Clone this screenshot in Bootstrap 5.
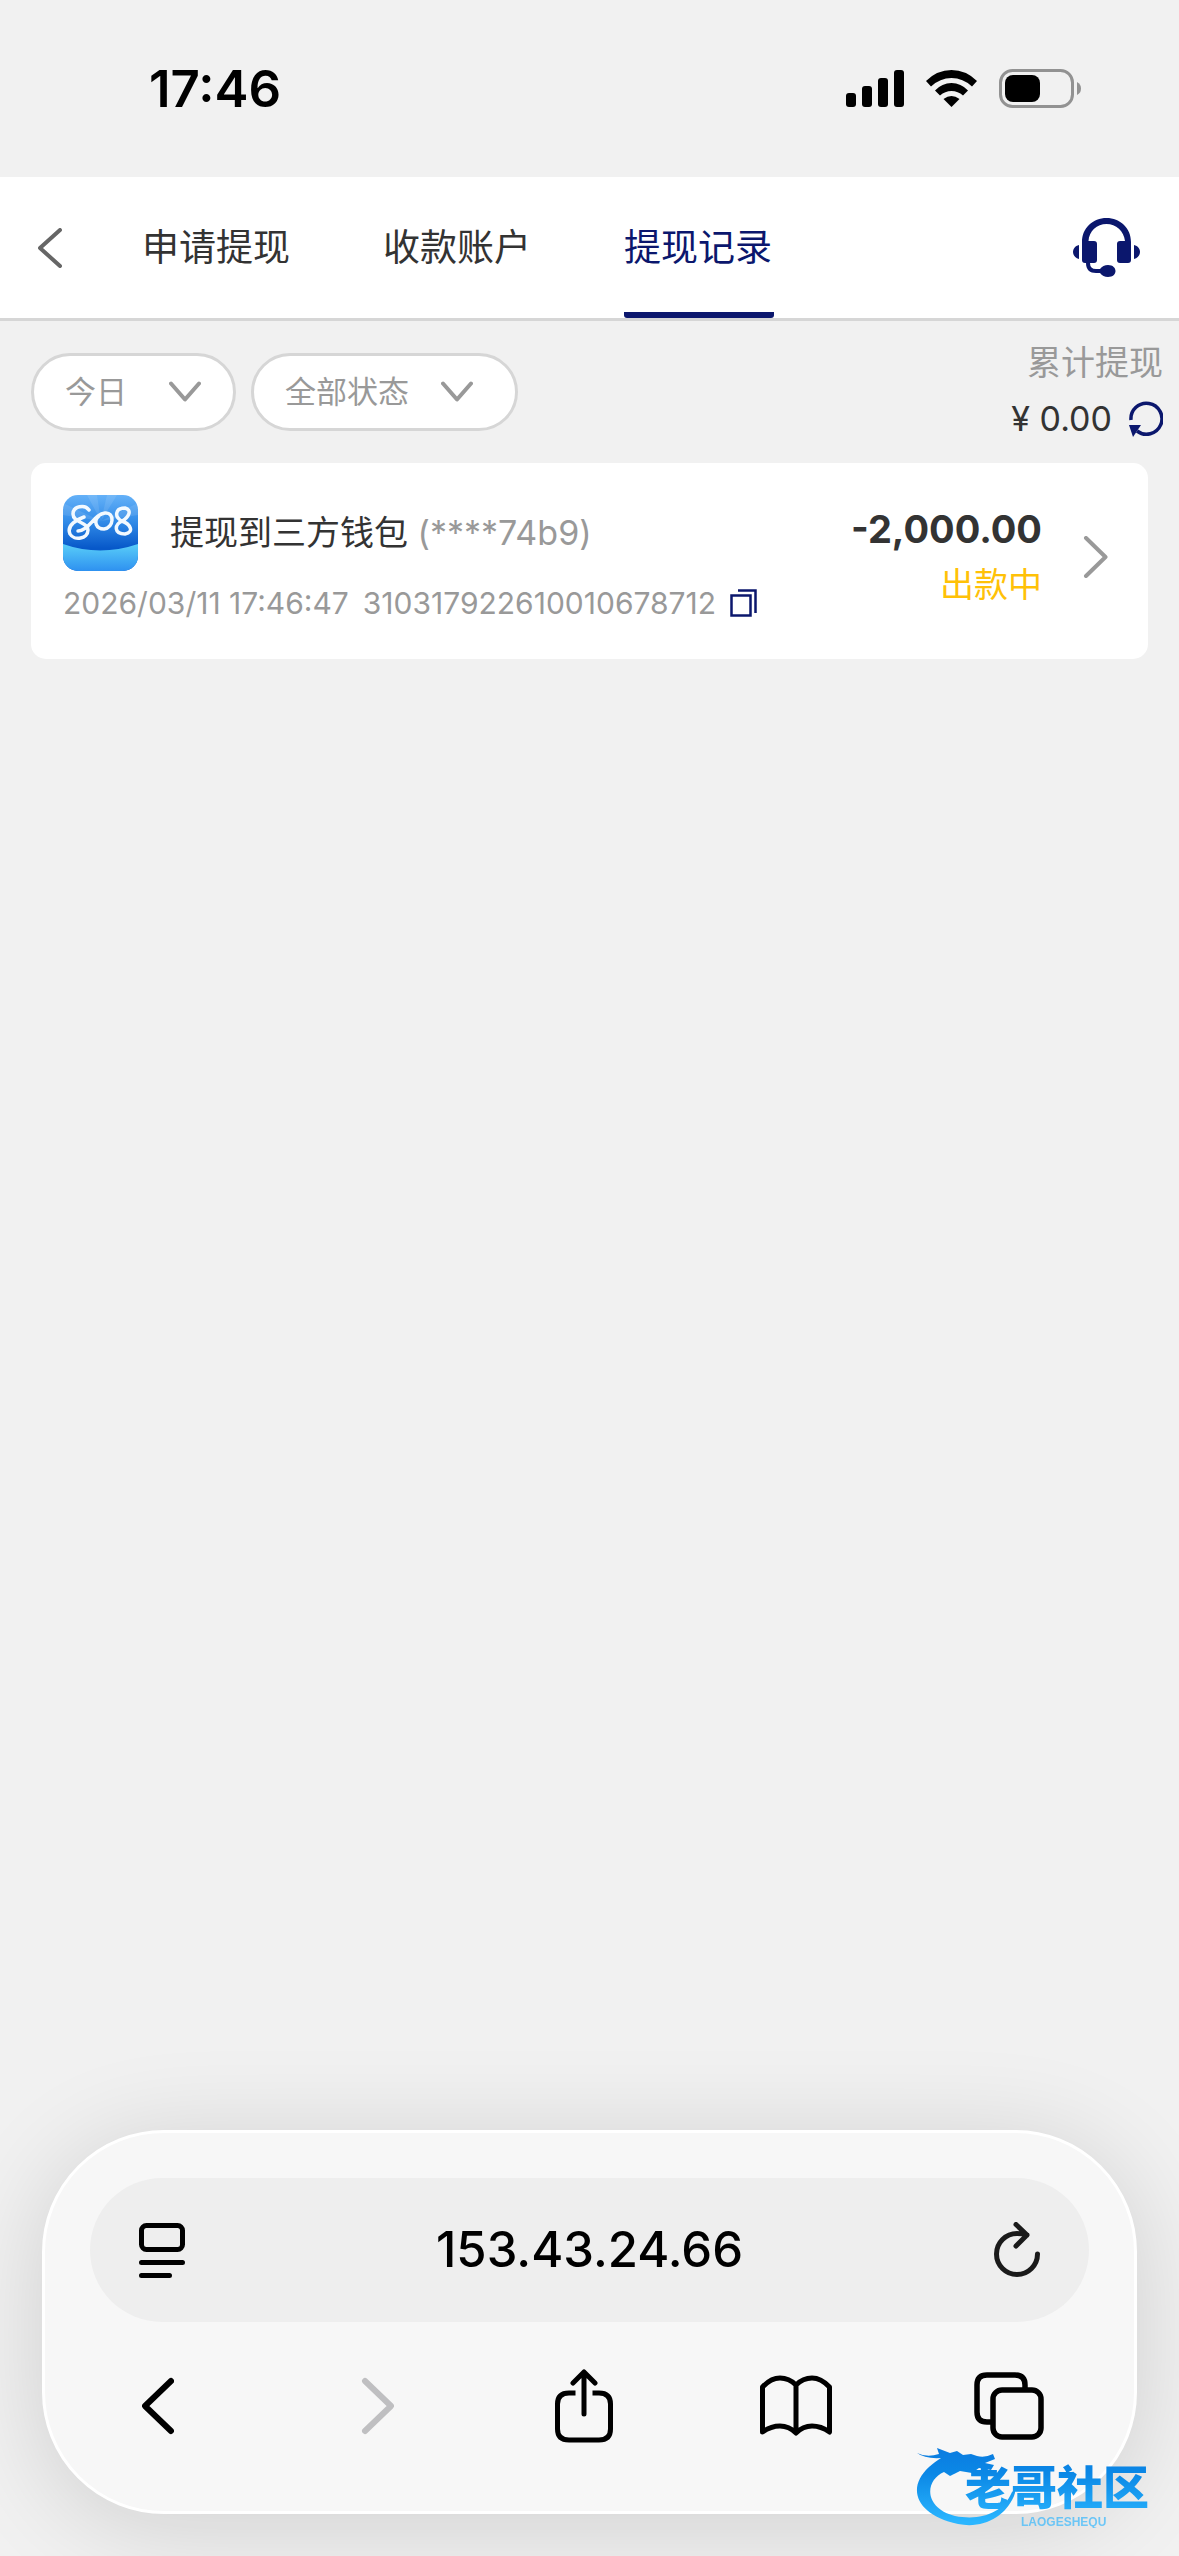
<!DOCTYPE html>
<html lang="zh-CN">
<head>
<meta charset="utf-8">
<meta name="viewport" content="width=device-width, initial-scale=1">
<title>提现记录</title>
<link href="https://cdn.jsdelivr.net/npm/bootstrap@5.3.0/dist/css/bootstrap.min.css" rel="stylesheet">
<style>
:root{--navy:#0b176d;--line:#d6d6d6;--muted:#999;--ink:#333}
body{background:#f1f1f1;color:var(--ink);font-family:Inter,"Noto Sans CJK SC",sans-serif;font-size:34px;line-height:48px}
svg{display:block;flex:none}
.btn{--bs-btn-padding-x:0;--bs-btn-padding-y:0;--bs-btn-border-width:0;--bs-btn-line-height:1}
.status-bar{height:177px;padding:0 97px 0 149px}
.clock{font-size:51px;font-weight:600;color:#000}
.status-icons{gap:22px}
.top-bar{height:144px;border-bottom:3px solid var(--line);padding:0 38px}
.back-btn{width:104px}
.tab-list{gap:91px}
.tab-list .nav-link{padding:6px 2px 0 0;border-bottom:6px solid transparent;border-radius:3px;color:var(--ink);font-size:37px;height:141px;display:flex;align-items:center}
.tab-list .nav-link.active{color:var(--navy);border-bottom-color:var(--navy)}
.filter-row{padding:14px 16px 0 31px;height:142px}
.filter-pill{--chev:url("data:image/svg+xml,%3Csvg xmlns='http://www.w3.org/2000/svg' viewBox='0 0 32 22'%3E%3Cpath d='M2 2.5 16 18.500 30 2.500' fill='none' stroke='%23999' stroke-width='4' stroke-linecap='round' stroke-linejoin='round'/%3E%3C/svg%3E");
 width:auto;height:78px;margin-top:18px;border:3px solid var(--line);border-radius:39px;background:#fff var(--chev) no-repeat right 32px center/32px 22px;color:var(--muted);font-size:31px;line-height:48px;padding:0 106px 0 31px}
.filter-wide{padding-right:106px;background-position:right 42px center}
.filters{gap:15px}
.muted{color:var(--muted)}
.total-box{padding-top:4px}
.total-line{gap:17px;height:48px;margin-top:8px}
.record{margin:0 31px;height:196px;border:0;border-radius:15px;padding:0 40px 0 32px}
.record-head{gap:32px;height:76px}
.record-meta{font-size:30px;line-height:48px;gap:14px;margin-top:8px}
.amount{font-size:38px;font-weight:700}
.pending{color:#ffc107}
.record-side{gap:8px}
.record-end{gap:41px;padding-bottom:8px}
.browser-panel{margin:0 42px 42px;border:3px solid #fff;border-radius:122px;background:#f7f7f7;padding:45px;box-shadow:0 12px 100px rgba(0,0,0,.14)}
.address{height:144px;border-radius:72px;background:#eee;padding:0 49px}
.address input{font-size:49px;font-weight:500;color:#000;min-width:0}
.tool-row{padding:24px 44px 0 32px;height:144px}
.tool-row .btn{width:72px;display:flex;justify-content:center}
.brand-mark{right:14px;bottom:28px;width:250px;height:86px}
</style>
</head>
<body class="d-flex flex-column min-vh-100">

<div class="status-bar d-flex justify-content-between align-items-center">
  <div class="clock">17:46</div>
  <div class="status-icons d-flex align-items-center">
    <svg width="58" height="38" viewBox="0 0 58 38" aria-label="信号"><rect x="0" y="23" width="10" height="14" rx="3"/><rect x="16" y="16" width="10" height="21" rx="3"/><rect x="32" y="8" width="10" height="29" rx="3"/><rect x="48" y="0" width="10" height="37" rx="3"/></svg>
    <svg width="51" height="38" viewBox="0 0 51 38" aria-label="无线网络"><path d="M0 11Q11 0 25.500 0T51 11L46 16.500Q37 8 25.500 8T5 16.500Z"/><path d="M9 20.500Q16 13 25.500 13T42 20.500L37 25.500Q32 21 25.500 21T14 25.500Z"/><path d="M17.500 29Q25.500 23 33.500 29L25.500 37Z"/></svg>
    <svg width="83" height="40" viewBox="0 0 83 40" aria-label="电池"><rect x="1.500" y="1.500" width="72" height="36" rx="12" fill="none" stroke="#929292" stroke-width="3"/><rect x="6" y="6" width="35" height="27" rx="8"/><path d="M78 13Q82 15 82 19.500T78 26Z" fill="#929292"/></svg>
  </div>
</div>

<header class="top-bar bg-white d-flex align-items-center">
  <button class="btn back-btn" type="button" aria-label="返回"><svg width="24" height="40" viewBox="0 0 24 40" fill="none" stroke="#666" stroke-width="4" stroke-linecap="round" stroke-linejoin="round"><path d="M22 2 2 20l20 18"/></svg></button>
  <nav class="nav tab-list flex-nowrap">
    <a class="nav-link" href="#">申请提现</a>
    <a class="nav-link" href="#">收款账户</a>
    <a class="nav-link active" aria-current="page" href="#">提现记录</a>
  </nav>
  <button class="btn ms-auto" type="button" aria-label="客服"><svg width="68" height="60" viewBox="0 0 68 60" fill="#0b176d"><path d="M9 24C9 10 20 0 33.500 0S58 10 58 24V42q0 3-3 3H47q-3 0-3-3V26q0-3 3-3h5C51 13 43 6 33.500 6S16 13 15.500 23H21q3 0 3 3v16q0 3-3 3h-4q0 6 6 6h4q3-4 8-4c10 0 10 12 0 12q-5 0-8-4h-4C17 55 13 52 13 45h-1q-3 0-3-3Z"/><path d="M6 27v14C-2 39-2 29 6 27ZM61 27v14c8-2 8-12 0-14Z"/></svg></button>
</header>

<main>
  <section class="filter-row d-flex justify-content-between align-items-start">
    <div class="filters d-flex">
      <select class="form-select filter-pill" aria-label="日期"><option>今日</option></select>
      <select class="form-select filter-pill filter-wide" aria-label="状态"><option>全部状态</option></select>
    </div>
    <div class="total-box text-end">
      <div class="muted">累计提现</div>
      <div class="total-line d-flex align-items-center justify-content-end">
        <span>¥ 0.00</span>
        <button class="btn" type="button" aria-label="刷新"><svg width="34" height="36" viewBox="0 0 34 36"><path d="M2 19A15.500 15.500 0 1 1 8 30" fill="none" stroke="#0b176d" stroke-width="3.500"/><path d="M0 24h12L4 36Z" fill="#0b176d"/></svg></button>
      </div>
    </div>
  </section>

  <article class="record card flex-row align-items-center justify-content-between">
    <div>
      <div class="record-head d-flex align-items-center">
        <svg width="75" height="76" viewBox="0 0 75 76" role="img" aria-label="808">
          <defs>
            <linearGradient id="sky" x2="0" y2="1"><stop stop-color="#64b1f8"/><stop offset=".35" stop-color="#318be8"/><stop offset=".7" stop-color="#0758c9"/></linearGradient>
            <linearGradient id="sea" x2="0" y1="48" y2="76" gradientUnits="userSpaceOnUse"><stop stop-color="#5bd0f9"/><stop offset="1" stop-color="#2e91f0"/></linearGradient>
            <clipPath id="tile"><rect width="75" height="76" rx="15"/></clipPath>
          </defs>
          <g clip-path="url(#tile)"><path fill="url(#sky)" d="M0 0h75v76H0z"/><path fill="#fff" opacity=".1" d="M38 26 24 0h10ZM38 26 44 0h10ZM38 26 0 8v12ZM38 26 75 8v12Z"/><path fill="url(#sea)" d="M0 49Q37 62 75 49V76H0Z"/></g>
          <g fill="none" stroke="#f2f9ff" stroke-width="3.500" stroke-linecap="round">
            <path d="M26 15C22 9 10 11 10 19c0 9 15 8 15 16 0 9-14 11-18 4-4-9 8-15 14-17"/>
            <path d="M15 36C26 36 31 19 42 18c10-1 9 15-1 16-8 0-11-8-5-13"/>
            <path d="M62 13c-10 0-11 9-3 13 8 3 13 11 3 13-11 0-11-9-3-13 6-3 11-11 3-13Z"/>
          </g>
        </svg>
        <div>提现到三方钱包 <span class="muted">(****74b9)</span></div>
      </div>
      <div class="record-meta muted d-flex align-items-center">
        <span>2026/03/11 17:46:47</span>
        <span>310317922610010678712</span>
        <button class="btn" type="button" aria-label="复制"><svg width="27" height="28" viewBox="0 0 27 28" fill="none" stroke="#0b176d" stroke-width="2.500"><rect x="1.500" y="6.500" width="19" height="20"/><path d="M8 1.500h17.500V24"/></svg></button>
      </div>
    </div>
    <div class="record-end d-flex align-items-center">
      <div class="text-end record-side d-flex flex-column">
        <div class="amount">-2,000.00</div>
        <div class="pending">出款中</div>
      </div>
      <a href="#" aria-label="详情"><svg width="25" height="42" viewBox="0 0 25 42" fill="none" stroke="#999" stroke-width="4" stroke-linecap="round" stroke-linejoin="round"><path d="m3 2 19.500 19L3 40"/></svg></a>
    </div>
  </article>
</main>

<footer class="browser-panel mt-auto">
  <div class="address d-flex align-items-center">
    <button class="btn" type="button" aria-label="页面设置"><svg width="46" height="55" viewBox="0 0 46 55" fill="none" stroke="#000" stroke-width="5" stroke-linecap="round"><rect x="2.500" y="2.500" width="41" height="24" rx="5"/><path d="M2.500 39.500h41M2.500 52.500h28"/></svg></button>
    <input class="form-control border-0 bg-transparent shadow-none text-center p-0 flex-grow-1" type="text" value="153.43.24.66" aria-label="地址">
    <button class="btn" type="button" aria-label="重新载入"><svg width="46" height="56" viewBox="0 0 46 56" fill="none" stroke="#1a1a1a" stroke-width="5" stroke-linecap="round" stroke-linejoin="round"><path d="M43.500 32A20.500 20.500 0 1 1 23 11.500Q28 11.500 33 13M22 2.500 33 13 22 24"/></svg></button>
  </div>
  <div class="tool-row d-flex align-items-center justify-content-between">
    <button class="btn" type="button" aria-label="后退"><svg width="32" height="58" viewBox="0 0 32 58" fill="none" stroke="#000" stroke-width="6" stroke-linecap="round" stroke-linejoin="round"><path d="M29 4 3 29l26 25"/></svg></button>
    <button class="btn opacity-100" type="button" aria-label="前进" disabled><svg width="46" height="58" viewBox="0 0 46 58" fill="none" stroke="#bfbfc1" stroke-width="6" stroke-linecap="round" stroke-linejoin="round"><path d="m17 4 26 25-26 25"/></svg></button>
    <button class="btn" type="button" aria-label="分享"><svg width="58" height="74" viewBox="0 0 58 74" fill="none" stroke="#000" stroke-width="5" stroke-linecap="round" stroke-linejoin="round"><path d="M20.500 24H14Q2.500 24 2.500 35V60Q2.500 71 14 71H44Q55.500 71 55.500 60V35Q55.500 24 44 24h-6.500" stroke-linecap="butt"/><path d="M29 45V3M18 14 29 3l11 11"/></svg></button>
    <button class="btn" type="button" aria-label="书签"><svg width="72" height="62" viewBox="0 0 72 62" fill="none" stroke="#000" stroke-width="5" stroke-linejoin="round"><path d="M36 10Q29 3 20 3T2.500 12V57Q11 51 20 51T36 58Q43 51 52 51T69.500 57V12Q61 3 52 3T36 10ZM36 10V58"/></svg></button>
    <button class="btn" type="button" aria-label="标签页"><svg width="70" height="68" viewBox="0 0 70 68" fill="none" stroke="#000" stroke-width="5.500"><path d="M17 50H13Q3 50 3 40V13Q3 3 13 3H41Q51 3 51 13V16"/><rect x="19" y="18" width="48" height="47" rx="9"/></svg></button>
  </div>
</footer>

<svg class="brand-mark position-fixed" viewBox="0 0 250 86" role="img" aria-label="老哥社区">
  <defs><linearGradient id="wave" x2="0" y1="0" y2="80" gradientUnits="userSpaceOnUse"><stop stop-color="#0a78df"/><stop offset=".4" stop-color="#0b88e6"/><stop offset="1" stop-color="#2bb6ff"/></linearGradient></defs>
  <g fill="url(#wave)">
    <path d="M2 11q10 5 22 1l-2-6 13 5 7-2 6 4 8-1 6 2q8 2 16-2l2 5-10 4 9 2-3 5-12-2-7 5-12-2-10 5-6-4C10 38 8 66 40 74c26 5 48-3 57-24q5-5 2 4C90 75 68 87 43 82 1 73-9 46 14 25q7-6 12-9Q10 17 2 11Z"/>
    <text x="50" y="62" font-family="Noto Sans CJK SC,sans-serif" font-weight="900" font-size="46">老哥社区</text>
    <text x="106" y="84" font-family="Liberation Sans,sans-serif" font-weight="700" font-size="12" opacity=".65">LAOGESHEQU</text>
  </g>
</svg>
<script src="https://cdn.jsdelivr.net/npm/bootstrap@5.3.0/dist/js/bootstrap.bundle.min.js"></script>
</body>
</html>
